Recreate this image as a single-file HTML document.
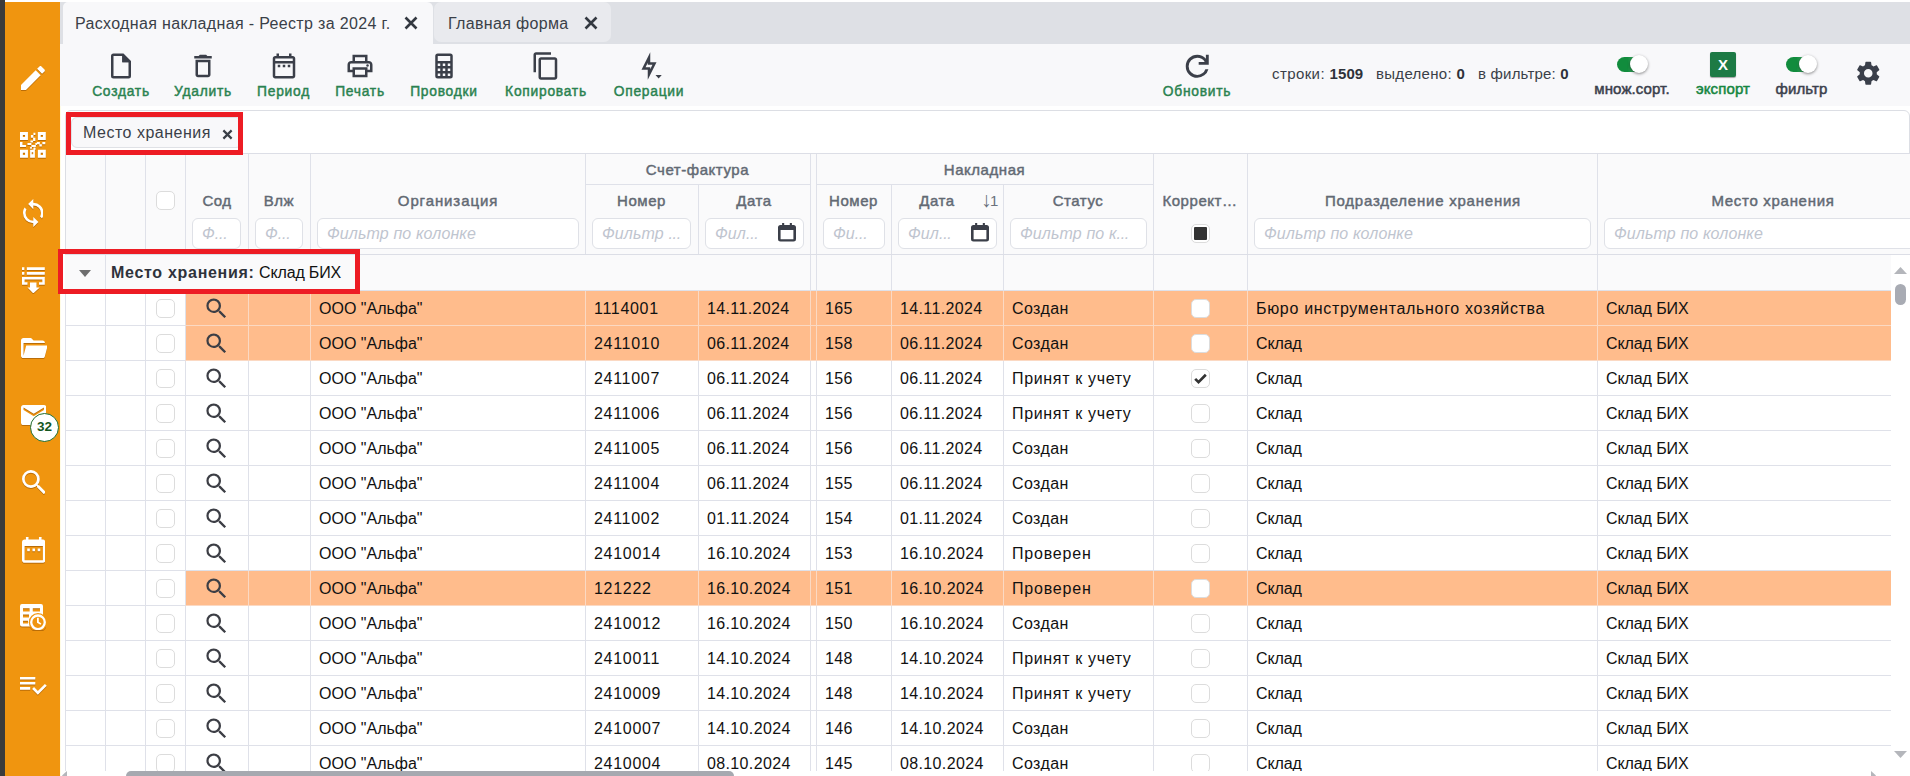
<!DOCTYPE html>
<html lang="ru">
<head>
<meta charset="utf-8">
<title>Расходная накладная - Реестр за 2024 г.</title>
<style>
*{box-sizing:border-box;margin:0;padding:0}
html,body{width:1910px;height:776px;overflow:hidden;background:#fff}
body{position:relative;font-family:"Liberation Sans","DejaVu Sans",sans-serif;font-size:16px;color:#111}
.abs{position:absolute}
svg{display:block}

/* ---------- sidebar ---------- */
#dark{left:0;top:0;width:5px;height:776px;background:#3b3b3b;z-index:32}
#side{left:5px;top:0;width:55px;height:776px;background:#f0950f;z-index:30}
#side svg{position:absolute;fill:#fff;filter:drop-shadow(0.5px 1.5px 0.6px rgba(120,60,0,.45))}
#badge{left:30px;top:413px;width:29px;height:29px;border-radius:50%;background:#fff;border:1.5px solid #1f6b2c;color:#14561f;font-weight:700;font-size:13.5px;text-align:center;line-height:26px;z-index:31;letter-spacing:0}

/* ---------- tabs ---------- */
#topline{left:5px;top:0;width:1905px;height:2px;background:#fff;z-index:31}
#tabbar{left:60px;top:1.5px;width:1850px;height:42.5px;background:#dee0e5}
.tab{position:absolute;top:.5px;height:42px;font-size:16px;color:#3a3f48;line-height:42px;white-space:nowrap}
#tab1{left:3px;width:370px;background:#f8f8fa;border-radius:5px 6px 0 0}
#tab2{left:374px;width:177px;height:40px;background:#e9eaee;border-radius:7px}
.tab span{position:absolute;top:0}
.tab svg{position:absolute;top:14px;width:14px;height:14px}

/* ---------- toolbar ---------- */
#toolbar{left:60px;top:44px;width:1850px;height:62px;background:#f8f8fa}
.tb{position:absolute;top:0;height:62px;text-align:center;white-space:nowrap}
.tb svg{position:absolute;fill:#3b3f49}
.tb b{position:absolute;left:-60px;right:-60px;top:38px;font-size:13.8px;line-height:20px;font-weight:400;color:#2a8250;-webkit-text-stroke:.45px #2a8250;text-align:center;letter-spacing:.75px}
.stat{position:absolute;top:20px;font-size:15px;line-height:20px;color:#3a3f48;white-space:nowrap;letter-spacing:.4px}
.stat b{font-weight:700;color:#2e323a;letter-spacing:.1px}
.lbl{position:absolute;top:35px;font-size:15px;line-height:20px;font-weight:400;color:#3a404c;-webkit-text-stroke:.5px #3a404c;white-space:nowrap;text-align:center;letter-spacing:.1px}
.lbl.g{color:#158640;-webkit-text-stroke-color:#158640}
.tog{position:absolute;top:12.5px;width:30px;height:15px;border-radius:7.5px;background:linear-gradient(90deg,#118c3d 0%,#118c3d 35%,#8cc7a0 100%)}
.tog i{position:absolute;right:-1px;top:-1.5px;width:18px;height:18px;border-radius:50%;background:#fff;box-shadow:0 1px 3px rgba(0,0,0,.45)}
#xls{left:1650px;top:7.5px;width:26px;height:25px;background:#1d7a45;border-radius:2px;box-shadow:0 1px 1px rgba(0,0,0,.35);color:#fff;font-weight:700;font-size:15px;line-height:25px;text-align:center}

/* ---------- grid container ---------- */
#grid{left:65px;top:110px;width:1845px;height:680px;border:1px solid #dcdee4;border-radius:6px 6px 0 0;background:#fff}
#chip{left:71px;top:117px;width:171px;height:31px;border:1px solid #dfe1e6;border-radius:6px;background:#f8f8fa;font-size:16px;line-height:30px;color:#3a3f48}
#chip span{position:absolute;left:11px;top:0;letter-spacing:.5px}
#chip svg{position:absolute;left:150px;top:11px;width:11px;height:11px}

/* ---------- header ---------- */
#head{left:66px;top:153px;width:1844px;height:102px;background:#fafafb;border-top:1px solid #dcdee6;border-bottom:1px solid #dcdee6}
.vl{position:absolute;width:1px;background:#dfe1e9}
.hl1{position:absolute;height:1px;background:#dfe1e9}
.h{position:absolute;font-size:15px;font-weight:400;color:#626973;-webkit-text-stroke:.45px #626973;line-height:20px;text-align:center;white-space:nowrap;letter-spacing:.55px}
.f{position:absolute;top:218px;height:31px;border:1px solid #dfe1e7;border-radius:6px;background:#fff;font-style:italic;font-size:16px;line-height:30px;color:#bfc5cf;padding-left:9px;white-space:nowrap;overflow:hidden;letter-spacing:.12px}
.f s{text-decoration:none;letter-spacing:-.3px}
.f svg{position:absolute;right:7px;top:4px;width:18px;height:19px;fill:#3b3f49}
.cb{display:block;position:absolute;width:19px;height:19px;border:1px solid #dcdcdc;border-radius:5px;background:#fff}
.cb svg{position:absolute;left:0;top:0;width:17px;height:17px}

/* ---------- rows ---------- */
#grow{left:65px;top:255px;width:1826px;height:36px;background:#fafafb}
.row{position:absolute;left:65px;width:1826px;height:35px;overflow:hidden}
.c{position:absolute;top:0;height:35px;border-left:1px solid #dfe1e9;border-bottom:1px solid #dfe1e9;background:#fff}
.t{font-size:16px;line-height:35px;padding-left:8px;white-space:nowrap;overflow:hidden;color:#111;letter-spacing:.36px}
.c5{letter-spacing:0}
.c6{letter-spacing:.7px}
.c13,.c14{letter-spacing:-.1px}
.c13.w{letter-spacing:.68px}
.hl .c{background:#ffbc8c;border-color:#fbd9c3}
.hl .c0,.hl .c1,.hl .c2{background:#fff;border-color:#dfe1e9}
.hl .c3{border-left-color:#dfe1e9}
.c2 .cb{left:10px;top:7.5px;height:19.5px}
.c12 .cb{left:37px;top:7.5px;height:19.5px}
.mag{position:absolute;left:17.2px;top:4.2px;width:27px;height:27px;fill:#3c3e45}
.c0{left:0px;width:40px}
.c1{left:40px;width:40px}
.c2{left:80px;width:40px}
.c3{left:120px;width:63px}
.c4{left:183px;width:62px}
.c5{left:245px;width:275px}
.c6{left:520px;width:113px}
.c7{left:633px;width:112px}
.c8{left:745px;width:6px}
.c9{left:751px;width:75px}
.c10{left:826px;width:112px}
.c11{left:938px;width:150px}
.c12{left:1088px;width:94px}
.c13{left:1182px;width:350px}
.c14{left:1532px;width:313px}

/* ---------- scrollbars ---------- */
#vs{left:1891px;top:255px;width:19px;height:516px;background:#fff}
#hs{left:61px;top:771px;width:1849px;height:5px;background:#fff;z-index:5}
.red{position:absolute;border:5px solid #ed1c24;z-index:40}
</style>
</head>
<body>

<!-- top tabs -->
<div id="topline" class="abs"></div>
<div id="tabbar" class="abs">
  <div class="tab" id="tab1"><span style="left:12px;top:1px;letter-spacing:.34px">Расходная накладная - Реестр за 2024 г.</span>
    <svg style="left:341px" viewBox="0 0 14 14"><path d="M1.5 1.5l11 11M12.5 1.5l-11 11" stroke="#333840" stroke-width="2.6" fill="none"/></svg></div>
  <div class="tab" id="tab2"><span style="left:14px;top:1px;letter-spacing:.33px">Главная форма</span>
    <svg style="left:150px" viewBox="0 0 14 14"><path d="M1.5 1.5l11 11M12.5 1.5l-11 11" stroke="#333840" stroke-width="2.6" fill="none"/></svg></div>
</div>

<!-- toolbar -->
<div id="toolbar" class="abs">
  <div class="tb" style="left:61px;width:0"><svg style="left:-15px;top:7px;width:30px;height:30px" viewBox="0 0 24 24"><path d="M14,2H6A2,2 0 0,0 4,4V20A2,2 0 0,0 6,22H18A2,2 0 0,0 20,20V8L14,2M18,20H6V4H13V9H18V20Z"/><path d="M13 3V9H19Z"/></svg><b>Создать</b></div>
  <div class="tb" style="left:143px;width:0"><svg style="left:-15px;top:7px;width:30px;height:30px" viewBox="0 0 24 24"><path d="M6 19c0 1.1.9 2 2 2h8c1.1 0 2-.9 2-2V7H6v12zM8 9h8v10H8V9zm7.5-5l-1-1h-5l-1 1H5v2h14V4h-3.5z"/></svg><b>Удалить</b></div>
  <div class="tb" style="left:223.5px;width:0"><svg style="left:-15px;top:7px;width:30px;height:30px" viewBox="0 0 24 24"><path d="M7 11h2v2H7v-2zm14-5v14c0 1.1-.9 2-2 2H5c-1.11 0-2-.9-2-2l.01-14c0-1.1.88-2 1.99-2h1V2h2v2h8V2h2v2h1c1.1 0 2 .9 2 2zM5 8h14V6H5v2zm14 12V10H5v10h14zm-4-7h2v-2h-2v2zm-4 0h2v-2h-2v2z"/></svg><b>Период</b></div>
  <div class="tb" style="left:300px;width:0"><svg style="left:-15px;top:7px;width:30px;height:30px" viewBox="0 0 24 24"><path d="M19 8h-1V3H6v5H5c-1.66 0-3 1.34-3 3v6h4v4h12v-4h4v-6c0-1.66-1.34-3-3-3zM8 5h8v3H8V5zm8 12v2H8v-4h8v2zm2-2v-2H6v2H4v-4c0-.55.45-1 1-1h14c.55 0 1 .45 1 1v4h-2z"/><circle cx="18" cy="11.5" r="1"/></svg><b>Печать</b></div>
  <div class="tb" style="left:384px;width:0"><svg style="left:-15px;top:7px;width:30px;height:30px" viewBox="0 0 24 24"><path d="M7,2H17A2,2 0 0,1 19,4V20A2,2 0 0,1 17,22H7A2,2 0 0,1 5,20V4A2,2 0 0,1 7,2M7,4V8H17V4H7M7,10V12H9V10H7M11,10V12H13V10H11M15,10V12H17V10H15M7,14V16H9V14H7M11,14V16H13V14H11M15,14V16H17V14H15M7,18V20H9V18H7M11,18V20H13V18H11M15,18V20H17V18H15Z"/></svg><b>Проводки</b></div>
  <div class="tb" style="left:486px;width:0"><svg style="left:-15px;top:7px;width:30px;height:30px" viewBox="0 0 24 24"><path d="M16 1H4c-1.1 0-2 .9-2 2v14h2V3h12V1zm3 4H8c-1.1 0-2 .9-2 2v14c0 1.1.9 2 2 2h11c1.1 0 2-.9 2-2V7c0-1.1-.9-2-2-2zm0 16H8V7h11v14z"/></svg><b>Копировать</b></div>
  <div class="tb" style="left:589px;width:0"><svg style="left:-15px;top:7px;width:30px;height:30px;overflow:visible" viewBox="0 0 24 24"><path d="M11 9.47V11H14.76L13 14.53V13H9.24L11 9.47M13 1L6 15H11V23L18 9H13V1Z"/><path d="M17.2 19.2h5l-2.5 2.7z"/></svg><b>Операции</b></div>
  <div class="tb" style="left:1137px;width:0"><svg style="left:-17px;top:5px;width:34.5px;height:34.5px" viewBox="0 -960 960 960"><path d="M480-160q-134 0-227-93t-93-227q0-134 93-227t227-93q69 0 132 28.5T720-690v-110h80v280H520v-80h168q-32-56-87.5-88T480-720q-100 0-170 70t-70 170q0 100 70 170t170 70q77 0 139-44t87-116h84q-28 106-114 173t-196 67Z"/></svg><b>Обновить</b></div>

  <div class="stat" style="left:1212px">строки: <b>1509</b></div>
  <div class="stat" style="left:1316px;letter-spacing:.3px">выделено: <b>0</b></div>
  <div class="stat" style="left:1418px;letter-spacing:.2px">в фильтре: <b>0</b></div>

  <div class="tog" style="left:1557px"><i></i></div>
  <div class="lbl" style="left:1512px;width:120px">множ.сорт.</div>
  <div id="xls" class="abs">X</div>
  <div class="lbl g" style="left:1603px;width:120px">экспорт</div>
  <div class="tog" style="left:1726px"><i></i></div>
  <div class="lbl" style="left:1681.5px;width:120px">фильтр</div>
  <svg class="abs" style="left:1794px;top:14.75px;width:28.5px;height:28.5px;fill:#3a3f4a" viewBox="0 0 24 24"><path d="M19.14,12.94c0.04-0.3,0.06-0.61,0.06-0.94c0-0.32-0.02-0.64-0.07-0.94l2.03-1.58c0.18-0.14,0.23-0.41,0.12-0.61 l-1.92-3.32c-0.12-0.22-0.37-0.29-0.59-0.22l-2.39,0.96c-0.5-0.38-1.03-0.7-1.62-0.94L14.4,2.81c-0.04-0.24-0.24-0.41-0.48-0.41 h-3.84c-0.24,0-0.43,0.17-0.47,0.41L9.25,5.35C8.66,5.59,8.12,5.92,7.63,6.29L5.24,5.33c-0.22-0.08-0.47,0-0.59,0.22L2.74,8.87 C2.62,9.08,2.66,9.34,2.86,9.48l2.03,1.58C4.84,11.36,4.8,11.69,4.8,12s0.02,0.64,0.07,0.94l-2.03,1.58 c-0.18,0.14-0.23,0.41-0.12,0.61l1.92,3.32c0.12,0.22,0.37,0.29,0.59,0.22l2.39-0.96c0.5,0.38,1.03,0.7,1.62,0.94l0.36,2.54 c0.05,0.24,0.24,0.41,0.48,0.41h3.84c0.24,0,0.44-0.17,0.47-0.41l0.36-2.54c0.59-0.24,1.13-0.56,1.62-0.94l2.39,0.96 c0.22,0.08,0.47,0,0.59-0.22l1.92-3.32c0.12-0.22,0.07-0.47-0.12-0.61L19.14,12.94z M12,15.6c-1.98,0-3.6-1.62-3.6-3.6 s1.62-3.6,3.6-3.6s3.6,1.62,3.6,3.6S13.98,15.6,12,15.6z"/></svg>
</div>

<!-- grid container -->
<div class="abs" style="left:60px;top:106px;width:1px;height:670px;background:#fffce6"></div>
<div id="grid" class="abs"></div>
<div id="chip" class="abs"><span>Место хранения</span><svg viewBox="0 0 12 12"><path d="M1.5 1.5l9 9M10.5 1.5l-9 9" stroke="#3a3f48" stroke-width="2.4" fill="none"/></svg></div>

<!-- header -->
<div id="head" class="abs"></div>
<div class="vl" style="left:105px;top:154px;height:100px"></div>
<div class="vl" style="left:145px;top:154px;height:100px"></div>
<div class="vl" style="left:185px;top:154px;height:100px"></div>
<div class="vl" style="left:248px;top:154px;height:100px"></div>
<div class="vl" style="left:310px;top:154px;height:100px"></div>
<div class="vl" style="left:585px;top:154px;height:100px"></div>
<div class="vl" style="left:810px;top:154px;height:100px"></div>
<div class="vl" style="left:816px;top:154px;height:100px"></div>
<div class="vl" style="left:1153px;top:154px;height:100px"></div>
<div class="vl" style="left:1247px;top:154px;height:100px"></div>
<div class="vl" style="left:1597px;top:154px;height:100px"></div>
<div class="vl" style="left:698px;top:185px;height:69px"></div>
<div class="vl" style="left:891px;top:185px;height:69px"></div>
<div class="vl" style="left:1003px;top:185px;height:69px"></div>
<div class="hl1" style="left:586px;top:184px;width:224px"></div>
<div class="hl1" style="left:817px;top:184px;width:336px"></div>
<div class="h" style="left:547.5px;width:300px;top:160px;">Счет-фактура</div>
<div class="h" style="left:834.5px;width:300px;top:160px;">Накладная</div>
<div class="h" style="left:67px;width:300px;top:191px;">Сод</div>
<div class="h" style="left:129px;width:300px;top:191px;">Влж</div>
<div class="h" style="left:298px;width:300px;top:191px;letter-spacing:.9px">Организация</div>
<div class="h" style="left:491.5px;width:300px;top:191px;">Номер</div>
<div class="h" style="left:604px;width:300px;top:191px;">Дата</div>
<div class="h" style="left:703.5px;width:300px;top:191px;">Номер</div>
<div class="h" style="left:787px;width:300px;top:191px;">Дата</div>
<div class="h" style="left:928px;width:300px;top:191px;">Статус</div>
<div class="h" style="left:1050px;width:300px;top:191px;">Коррект…</div>
<div class="h" style="left:1273px;width:300px;top:191px;letter-spacing:.77px">Подразделение хранения</div>
<div class="h" style="left:1623px;width:300px;top:191px;letter-spacing:.7px">Место хранения</div>
<div class="h" style="left:980px;top:188.500px;width:18px;font-weight:400;font-size:15px;letter-spacing:-1.500px;color:#6b727d;-webkit-text-stroke:0"><span style="font-size:21px;line-height:20px;position:relative;top:1.500px">↓</span>1</div>
<div class="f" style="left:192px;width:49px">Ф<s>...</s></div>
<div class="f" style="left:255px;width:48px">Ф<s>...</s></div>
<div class="f" style="left:317px;width:262px">Фильтр по колонке</div>
<div class="f" style="left:592px;width:99px">Фильтр <s>...</s></div>
<div class="f" style="left:705px;width:99px">Фил<s>...</s><svg viewBox="0 0 18 19"><path d="M4.1 0h2.1v3H4.1zM11.8 0h2.1v3h-2.1z"/><path fill-rule="evenodd" d="M2.5 2h13a2.5 2.5 0 0 1 2.5 2.5v11.5a2.5 2.5 0 0 1-2.5 2.5h-13a2.500 2.500 0 0 1-2.500-2.500v-11.500a2.500 2.500 0 0 1 2.500-2.500zM2.600 7h12.800v9.200h-12.800z"/></svg></div>
<div class="f" style="left:823px;width:62px">Фи<s>...</s></div>
<div class="f" style="left:898px;width:99px">Фил<s>...</s><svg viewBox="0 0 18 19"><path d="M4.1 0h2.1v3H4.1zM11.8 0h2.1v3h-2.1z"/><path fill-rule="evenodd" d="M2.5 2h13a2.5 2.5 0 0 1 2.5 2.5v11.5a2.5 2.5 0 0 1-2.5 2.5h-13a2.500 2.500 0 0 1-2.500-2.500v-11.500a2.500 2.500 0 0 1 2.500-2.500zM2.600 7h12.800v9.200h-12.800z"/></svg></div>
<div class="f" style="left:1010px;width:137px">Фильтр по к<s>...</s></div>
<div class="f" style="left:1254px;width:337px">Фильтр по колонке</div>
<div class="f" style="left:1604px;width:337px">Фильтр по колонке</div>
<i class="cb" style="left:156px;top:191px"></i>
<i class="cb" style="left:1191px;top:224px"><b style="position:absolute;left:2.25px;top:2.25px;width:12.5px;height:12.5px;background:#333;border-radius:1px"></b></i>

<!-- group row -->
<div id="grow" class="abs"></div>
<div class="vl" style="left:105px;top:255px;height:35px"></div>
<div class="vl" style="left:810px;top:255px;height:35px"></div>
<div class="vl" style="left:816px;top:255px;height:35px"></div>
<div class="vl" style="left:891px;top:255px;height:35px"></div>
<div class="vl" style="left:1003px;top:255px;height:35px"></div>
<div class="vl" style="left:1153px;top:255px;height:35px"></div>
<div class="vl" style="left:1247px;top:255px;height:35px"></div>
<div class="vl" style="left:1597px;top:255px;height:35px"></div>
<div class="hl1" style="left:66px;top:290px;width:1825px"></div>
<svg class="abs" style="left:79px;top:270px;width:12px;height:7px" viewBox="0 0 12 7"><path d="M0 0H12L6 7Z" fill="#6e6e6e"/></svg>
<div class="abs" style="left:111px;top:262px;font-size:16px;line-height:22px;white-space:nowrap;color:#111"><b style="color:#2f333b;letter-spacing:.7px">Место хранения:</b> <span style="letter-spacing:-.15px">Склад БИХ</span></div>

<!-- data rows -->
<div class="row hl" style="top:291px"><div class="c c0"></div><div class="c c1"></div><div class="c c2"><i class="cb"></i></div><div class="c c3"><svg class="mag" viewBox="0 0 24 24"><path d="M9.5,3A6.5,6.5 0 0,1 16,9.5C16,11.11 15.41,12.59 14.44,13.73L14.71,14H15.5L20.5,19L19,20.5L14,15.5V14.71L13.73,14.44C12.59,15.41 11.11,16 9.5,16A6.5,6.5 0 0,1 3,9.5A6.5,6.5 0 0,1 9.5,3M9.5,5C7,5 5,7 5,9.5C5,12 7,14 9.5,14C12,14 14,12 14,9.5C14,7 12,5 9.5,5Z"/></svg></div><div class="c c4"></div><div class="c c5 t">ООО "Альфа"</div><div class="c c6 t">1114001</div><div class="c c7 t">14.11.2024</div><div class="c c8"></div><div class="c c9 t">165</div><div class="c c10 t">14.11.2024</div><div class="c c11 t" style="letter-spacing:0.4px">Создан</div><div class="c c12"><i class="cb"></i></div><div class="c c13 t w">Бюро инструментального хозяйства</div><div class="c c14 t">Склад БИХ</div></div>
<div class="row hl" style="top:326px"><div class="c c0"></div><div class="c c1"></div><div class="c c2"><i class="cb"></i></div><div class="c c3"><svg class="mag" viewBox="0 0 24 24"><path d="M9.5,3A6.5,6.5 0 0,1 16,9.5C16,11.11 15.41,12.59 14.44,13.73L14.71,14H15.5L20.5,19L19,20.5L14,15.5V14.71L13.73,14.44C12.59,15.41 11.11,16 9.5,16A6.5,6.5 0 0,1 3,9.5A6.5,6.5 0 0,1 9.5,3M9.5,5C7,5 5,7 5,9.5C5,12 7,14 9.5,14C12,14 14,12 14,9.5C14,7 12,5 9.5,5Z"/></svg></div><div class="c c4"></div><div class="c c5 t">ООО "Альфа"</div><div class="c c6 t">2411010</div><div class="c c7 t">06.11.2024</div><div class="c c8"></div><div class="c c9 t">158</div><div class="c c10 t">06.11.2024</div><div class="c c11 t" style="letter-spacing:0.4px">Создан</div><div class="c c12"><i class="cb"></i></div><div class="c c13 t">Склад</div><div class="c c14 t">Склад БИХ</div></div>
<div class="row" style="top:361px"><div class="c c0"></div><div class="c c1"></div><div class="c c2"><i class="cb"></i></div><div class="c c3"><svg class="mag" viewBox="0 0 24 24"><path d="M9.5,3A6.5,6.5 0 0,1 16,9.5C16,11.11 15.41,12.59 14.44,13.73L14.71,14H15.5L20.5,19L19,20.5L14,15.5V14.71L13.73,14.44C12.59,15.41 11.11,16 9.5,16A6.5,6.5 0 0,1 3,9.5A6.5,6.5 0 0,1 9.5,3M9.5,5C7,5 5,7 5,9.5C5,12 7,14 9.5,14C12,14 14,12 14,9.5C14,7 12,5 9.5,5Z"/></svg></div><div class="c c4"></div><div class="c c5 t">ООО "Альфа"</div><div class="c c6 t">2411007</div><div class="c c7 t">06.11.2024</div><div class="c c8"></div><div class="c c9 t">156</div><div class="c c10 t">06.11.2024</div><div class="c c11 t" style="letter-spacing:0.66px">Принят к учету</div><div class="c c12"><i class="cb on"><svg viewBox="0 0 24 24"><path d="M4.500 12.500l4.700 4.600L19.500 6.800" fill="none" stroke="#333" stroke-width="3.800"/></svg></i></div><div class="c c13 t">Склад</div><div class="c c14 t">Склад БИХ</div></div>
<div class="row" style="top:396px"><div class="c c0"></div><div class="c c1"></div><div class="c c2"><i class="cb"></i></div><div class="c c3"><svg class="mag" viewBox="0 0 24 24"><path d="M9.5,3A6.5,6.5 0 0,1 16,9.5C16,11.11 15.41,12.59 14.44,13.73L14.71,14H15.5L20.5,19L19,20.5L14,15.5V14.71L13.73,14.44C12.59,15.41 11.11,16 9.5,16A6.5,6.5 0 0,1 3,9.5A6.5,6.5 0 0,1 9.5,3M9.5,5C7,5 5,7 5,9.5C5,12 7,14 9.5,14C12,14 14,12 14,9.5C14,7 12,5 9.5,5Z"/></svg></div><div class="c c4"></div><div class="c c5 t">ООО "Альфа"</div><div class="c c6 t">2411006</div><div class="c c7 t">06.11.2024</div><div class="c c8"></div><div class="c c9 t">156</div><div class="c c10 t">06.11.2024</div><div class="c c11 t" style="letter-spacing:0.66px">Принят к учету</div><div class="c c12"><i class="cb"></i></div><div class="c c13 t">Склад</div><div class="c c14 t">Склад БИХ</div></div>
<div class="row" style="top:431px"><div class="c c0"></div><div class="c c1"></div><div class="c c2"><i class="cb"></i></div><div class="c c3"><svg class="mag" viewBox="0 0 24 24"><path d="M9.5,3A6.5,6.5 0 0,1 16,9.5C16,11.11 15.41,12.59 14.44,13.73L14.71,14H15.5L20.5,19L19,20.5L14,15.5V14.71L13.73,14.44C12.59,15.41 11.11,16 9.5,16A6.5,6.5 0 0,1 3,9.5A6.5,6.5 0 0,1 9.5,3M9.5,5C7,5 5,7 5,9.5C5,12 7,14 9.5,14C12,14 14,12 14,9.5C14,7 12,5 9.5,5Z"/></svg></div><div class="c c4"></div><div class="c c5 t">ООО "Альфа"</div><div class="c c6 t">2411005</div><div class="c c7 t">06.11.2024</div><div class="c c8"></div><div class="c c9 t">156</div><div class="c c10 t">06.11.2024</div><div class="c c11 t" style="letter-spacing:0.4px">Создан</div><div class="c c12"><i class="cb"></i></div><div class="c c13 t">Склад</div><div class="c c14 t">Склад БИХ</div></div>
<div class="row" style="top:466px"><div class="c c0"></div><div class="c c1"></div><div class="c c2"><i class="cb"></i></div><div class="c c3"><svg class="mag" viewBox="0 0 24 24"><path d="M9.5,3A6.5,6.5 0 0,1 16,9.5C16,11.11 15.41,12.59 14.44,13.73L14.71,14H15.5L20.5,19L19,20.5L14,15.5V14.71L13.73,14.44C12.59,15.41 11.11,16 9.5,16A6.5,6.5 0 0,1 3,9.5A6.5,6.5 0 0,1 9.5,3M9.5,5C7,5 5,7 5,9.5C5,12 7,14 9.5,14C12,14 14,12 14,9.5C14,7 12,5 9.5,5Z"/></svg></div><div class="c c4"></div><div class="c c5 t">ООО "Альфа"</div><div class="c c6 t">2411004</div><div class="c c7 t">06.11.2024</div><div class="c c8"></div><div class="c c9 t">155</div><div class="c c10 t">06.11.2024</div><div class="c c11 t" style="letter-spacing:0.4px">Создан</div><div class="c c12"><i class="cb"></i></div><div class="c c13 t">Склад</div><div class="c c14 t">Склад БИХ</div></div>
<div class="row" style="top:501px"><div class="c c0"></div><div class="c c1"></div><div class="c c2"><i class="cb"></i></div><div class="c c3"><svg class="mag" viewBox="0 0 24 24"><path d="M9.5,3A6.5,6.5 0 0,1 16,9.5C16,11.11 15.41,12.59 14.44,13.73L14.71,14H15.5L20.5,19L19,20.5L14,15.5V14.71L13.73,14.44C12.59,15.41 11.11,16 9.5,16A6.5,6.5 0 0,1 3,9.5A6.5,6.5 0 0,1 9.5,3M9.5,5C7,5 5,7 5,9.5C5,12 7,14 9.5,14C12,14 14,12 14,9.5C14,7 12,5 9.5,5Z"/></svg></div><div class="c c4"></div><div class="c c5 t">ООО "Альфа"</div><div class="c c6 t">2411002</div><div class="c c7 t">01.11.2024</div><div class="c c8"></div><div class="c c9 t">154</div><div class="c c10 t">01.11.2024</div><div class="c c11 t" style="letter-spacing:0.4px">Создан</div><div class="c c12"><i class="cb"></i></div><div class="c c13 t">Склад</div><div class="c c14 t">Склад БИХ</div></div>
<div class="row" style="top:536px"><div class="c c0"></div><div class="c c1"></div><div class="c c2"><i class="cb"></i></div><div class="c c3"><svg class="mag" viewBox="0 0 24 24"><path d="M9.5,3A6.5,6.5 0 0,1 16,9.5C16,11.11 15.41,12.59 14.44,13.73L14.71,14H15.5L20.5,19L19,20.5L14,15.5V14.71L13.73,14.44C12.59,15.41 11.11,16 9.5,16A6.5,6.5 0 0,1 3,9.5A6.5,6.5 0 0,1 9.5,3M9.5,5C7,5 5,7 5,9.5C5,12 7,14 9.5,14C12,14 14,12 14,9.5C14,7 12,5 9.5,5Z"/></svg></div><div class="c c4"></div><div class="c c5 t">ООО "Альфа"</div><div class="c c6 t">2410014</div><div class="c c7 t">16.10.2024</div><div class="c c8"></div><div class="c c9 t">153</div><div class="c c10 t">16.10.2024</div><div class="c c11 t" style="letter-spacing:0.8px">Проверен</div><div class="c c12"><i class="cb"></i></div><div class="c c13 t">Склад</div><div class="c c14 t">Склад БИХ</div></div>
<div class="row hl" style="top:571px"><div class="c c0"></div><div class="c c1"></div><div class="c c2"><i class="cb"></i></div><div class="c c3"><svg class="mag" viewBox="0 0 24 24"><path d="M9.5,3A6.5,6.5 0 0,1 16,9.5C16,11.11 15.41,12.59 14.44,13.73L14.71,14H15.5L20.5,19L19,20.5L14,15.5V14.71L13.73,14.44C12.59,15.41 11.11,16 9.5,16A6.5,6.5 0 0,1 3,9.5A6.5,6.5 0 0,1 9.5,3M9.5,5C7,5 5,7 5,9.5C5,12 7,14 9.5,14C12,14 14,12 14,9.5C14,7 12,5 9.5,5Z"/></svg></div><div class="c c4"></div><div class="c c5 t">ООО "Альфа"</div><div class="c c6 t">121222</div><div class="c c7 t">16.10.2024</div><div class="c c8"></div><div class="c c9 t">151</div><div class="c c10 t">16.10.2024</div><div class="c c11 t" style="letter-spacing:0.8px">Проверен</div><div class="c c12"><i class="cb"></i></div><div class="c c13 t">Склад</div><div class="c c14 t">Склад БИХ</div></div>
<div class="row" style="top:606px"><div class="c c0"></div><div class="c c1"></div><div class="c c2"><i class="cb"></i></div><div class="c c3"><svg class="mag" viewBox="0 0 24 24"><path d="M9.5,3A6.5,6.5 0 0,1 16,9.5C16,11.11 15.41,12.59 14.44,13.73L14.71,14H15.5L20.5,19L19,20.5L14,15.5V14.71L13.73,14.44C12.59,15.41 11.11,16 9.5,16A6.5,6.5 0 0,1 3,9.5A6.5,6.5 0 0,1 9.5,3M9.5,5C7,5 5,7 5,9.5C5,12 7,14 9.5,14C12,14 14,12 14,9.5C14,7 12,5 9.5,5Z"/></svg></div><div class="c c4"></div><div class="c c5 t">ООО "Альфа"</div><div class="c c6 t">2410012</div><div class="c c7 t">16.10.2024</div><div class="c c8"></div><div class="c c9 t">150</div><div class="c c10 t">16.10.2024</div><div class="c c11 t" style="letter-spacing:0.4px">Создан</div><div class="c c12"><i class="cb"></i></div><div class="c c13 t">Склад</div><div class="c c14 t">Склад БИХ</div></div>
<div class="row" style="top:641px"><div class="c c0"></div><div class="c c1"></div><div class="c c2"><i class="cb"></i></div><div class="c c3"><svg class="mag" viewBox="0 0 24 24"><path d="M9.5,3A6.5,6.5 0 0,1 16,9.5C16,11.11 15.41,12.59 14.44,13.73L14.71,14H15.5L20.5,19L19,20.5L14,15.5V14.71L13.73,14.44C12.59,15.41 11.11,16 9.5,16A6.5,6.5 0 0,1 3,9.5A6.5,6.5 0 0,1 9.5,3M9.5,5C7,5 5,7 5,9.5C5,12 7,14 9.5,14C12,14 14,12 14,9.5C14,7 12,5 9.5,5Z"/></svg></div><div class="c c4"></div><div class="c c5 t">ООО "Альфа"</div><div class="c c6 t">2410011</div><div class="c c7 t">14.10.2024</div><div class="c c8"></div><div class="c c9 t">148</div><div class="c c10 t">14.10.2024</div><div class="c c11 t" style="letter-spacing:0.66px">Принят к учету</div><div class="c c12"><i class="cb"></i></div><div class="c c13 t">Склад</div><div class="c c14 t">Склад БИХ</div></div>
<div class="row" style="top:676px"><div class="c c0"></div><div class="c c1"></div><div class="c c2"><i class="cb"></i></div><div class="c c3"><svg class="mag" viewBox="0 0 24 24"><path d="M9.5,3A6.5,6.5 0 0,1 16,9.5C16,11.11 15.41,12.59 14.44,13.73L14.71,14H15.5L20.5,19L19,20.5L14,15.5V14.71L13.73,14.44C12.59,15.41 11.11,16 9.5,16A6.5,6.5 0 0,1 3,9.5A6.5,6.5 0 0,1 9.5,3M9.5,5C7,5 5,7 5,9.5C5,12 7,14 9.5,14C12,14 14,12 14,9.5C14,7 12,5 9.5,5Z"/></svg></div><div class="c c4"></div><div class="c c5 t">ООО "Альфа"</div><div class="c c6 t">2410009</div><div class="c c7 t">14.10.2024</div><div class="c c8"></div><div class="c c9 t">148</div><div class="c c10 t">14.10.2024</div><div class="c c11 t" style="letter-spacing:0.66px">Принят к учету</div><div class="c c12"><i class="cb"></i></div><div class="c c13 t">Склад</div><div class="c c14 t">Склад БИХ</div></div>
<div class="row" style="top:711px"><div class="c c0"></div><div class="c c1"></div><div class="c c2"><i class="cb"></i></div><div class="c c3"><svg class="mag" viewBox="0 0 24 24"><path d="M9.5,3A6.5,6.5 0 0,1 16,9.5C16,11.11 15.41,12.59 14.44,13.73L14.71,14H15.5L20.5,19L19,20.5L14,15.5V14.71L13.73,14.44C12.59,15.41 11.11,16 9.5,16A6.5,6.5 0 0,1 3,9.5A6.5,6.5 0 0,1 9.5,3M9.5,5C7,5 5,7 5,9.5C5,12 7,14 9.5,14C12,14 14,12 14,9.5C14,7 12,5 9.5,5Z"/></svg></div><div class="c c4"></div><div class="c c5 t">ООО "Альфа"</div><div class="c c6 t">2410007</div><div class="c c7 t">14.10.2024</div><div class="c c8"></div><div class="c c9 t">146</div><div class="c c10 t">14.10.2024</div><div class="c c11 t" style="letter-spacing:0.4px">Создан</div><div class="c c12"><i class="cb"></i></div><div class="c c13 t">Склад</div><div class="c c14 t">Склад БИХ</div></div>
<div class="row" style="top:746px"><div class="c c0"></div><div class="c c1"></div><div class="c c2"><i class="cb"></i></div><div class="c c3"><svg class="mag" viewBox="0 0 24 24"><path d="M9.5,3A6.5,6.5 0 0,1 16,9.5C16,11.11 15.41,12.59 14.44,13.73L14.71,14H15.5L20.5,19L19,20.5L14,15.5V14.71L13.73,14.44C12.59,15.41 11.11,16 9.5,16A6.5,6.5 0 0,1 3,9.5A6.5,6.5 0 0,1 9.5,3M9.5,5C7,5 5,7 5,9.5C5,12 7,14 9.5,14C12,14 14,12 14,9.5C14,7 12,5 9.5,5Z"/></svg></div><div class="c c4"></div><div class="c c5 t">ООО "Альфа"</div><div class="c c6 t">2410004</div><div class="c c7 t">08.10.2024</div><div class="c c8"></div><div class="c c9 t">145</div><div class="c c10 t">08.10.2024</div><div class="c c11 t" style="letter-spacing:0.4px">Создан</div><div class="c c12"><i class="cb"></i></div><div class="c c13 t">Склад</div><div class="c c14 t">Склад БИХ</div></div>

<!-- scrollbars -->
<div id="vs" class="abs">
  <svg class="abs" style="left:3px;top:12px;width:13px;height:7px" viewBox="0 0 13 7"><path d="M0 7L6.5 0L13 7Z" fill="#b4b6bb"/></svg>
  <div class="abs" style="left:4px;top:29px;width:11px;height:21px;border-radius:5.5px;background:#a8abb3"></div>
  <svg class="abs" style="left:3px;top:496px;width:13px;height:7px" viewBox="0 0 13 7"><path d="M0 0L6.5 7L13 0Z" fill="#b4b6bb"/></svg>
</div>
<div id="hs" class="abs">
  <svg class="abs" style="left:1px;top:0;width:5px;height:8px" viewBox="0 0 5 8"><path d="M5 0L0 4.5L5 9Z" fill="#b4b6bb"/></svg>
  <div class="abs" style="left:65px;top:0;width:608px;height:10px;border-radius:5px;background:#a6a9b0"></div>
  <svg class="abs" style="left:1810px;top:0;width:5px;height:8px" viewBox="0 0 5 8"><path d="M0 0L5 4.5L0 9Z" fill="#b4b6bb"/></svg>
</div>

<!-- red annotation boxes -->
<div class="red" style="left:66px;top:112px;width:177px;height:43px"></div>
<div class="red" style="left:58px;top:249px;width:302px;height:45px"></div>

<!-- sidebar -->
<div id="dark" class="abs"></div>
<div id="side" class="abs">
<svg style="left:16.3px;top:66.0px;width:23.9px;height:24px" viewBox="3 3 18 18" preserveAspectRatio="none"><path fill-rule="evenodd" d="M20.71,7.04C21.1,6.65 21.1,6 20.71,5.63L18.37,3.29C18,2.9 17.35,2.9 16.96,3.29L15.12,5.12L18.87,8.87M3,17.25V21H6.75L17.81,9.93L14.06,6.18L3,17.25Z"/></svg>
<svg style="left:17.8px;top:198.9px;width:20.6px;height:28.1px" viewBox="4 1 16 22" preserveAspectRatio="none"><path fill-rule="evenodd" d="M12,18A6,6 0 0,1 6,12C6,11 6.25,10.03 6.7,9.2L5.24,7.74C4.46,8.97 4,10.43 4,12A8,8 0 0,0 12,20V23L16,19L12,15M12,4V1L8,5L12,9V6A6,6 0 0,1 18,12C18,13 17.75,13.97 17.3,14.8L18.76,16.26C19.54,15.03 20,13.57 20,12A8,8 0 0,0 12,4Z"/></svg>
<svg style="left:15.6px;top:337.8px;width:26.7px;height:20.3px" viewBox="2 4 21.21 16" preserveAspectRatio="none"><path fill-rule="evenodd" d="M19,20H4C2.89,20 2,19.1 2,18V6C2,4.89 2.89,4 4,4H10L12,6H19A2,2 0 0,1 21,8H21L4,8V18L6.14,10H23.21L20.93,18.5C20.7,19.37 19.92,20 19,20Z"/></svg>
<svg style="left:15.8px;top:405.1px;width:25.5px;height:20.2px" viewBox="2 4 20 16" preserveAspectRatio="none"><path fill-rule="evenodd" d="M20,8L12,13L4,8V6L12,11L20,6M20,4H4C2.89,4 2,4.89 2,6V18A2,2 0 0,0 4,20H20A2,2 0 0,0 22,18V6C22,4.89 21.1,4 20,4Z"/></svg>
<svg style="left:16.5px;top:470.2px;width:23.9px;height:24.2px" viewBox="3 3 17.5 17.5" preserveAspectRatio="none"><path fill-rule="evenodd" d="M9.5,3A6.5,6.5 0 0,1 16,9.5C16,11.11 15.41,12.59 14.44,13.73L14.71,14H15.5L20.5,19L19,20.5L14,15.5V14.71L13.73,14.44C12.59,15.41 11.11,16 9.5,16A6.5,6.5 0 0,1 3,9.5A6.5,6.5 0 0,1 9.5,3M9.5,5C7,5 5,7 5,9.5C5,12 7,14 9.5,14C12,14 14,12 14,9.5C14,7 12,5 9.5,5Z"/></svg>
<svg style="left:16.9px;top:537.2px;width:23.5px;height:25.8px" viewBox="3 2 18 20" preserveAspectRatio="none"><path fill-rule="evenodd" d="M9 11H7v2h2v-2zm4 0h-2v2h2v-2zm4 0h-2v2h2v-2zm2-7h-1V2h-2v2H8V2H6v2H5c-1.11 0-1.99.9-1.99 2L3 20c0 1.1.89 2 2 2h14c1.1 0 2-.9 2-2V6c0-1.1-.9-2-2-2zm0 16H5V9h14v11z"/></svg>
<svg style="left:15.2px;top:677.4px;width:26.8px;height:17.7px" viewBox="2 6 21 14" preserveAspectRatio="none"><path fill-rule="evenodd" d="M14,10H2V12H14V10M14,6H2V8H14V6M2,16H10V14H2V16M21.5,11.5L23,13L16,20L11.5,15.5L13,14L16,17L21.5,11.5Z"/></svg>
<svg style="left:15.2px;top:132.2px;width:25.8px;height:25.8px" viewBox="0 0 26 26"><path fill-rule="evenodd" d="M0 0h8v8H0zM2.9 2.9v2.2h2.2V2.9zM18 0h8v8h-8zM20.9 2.9v2.2h2.2V2.9zM0 18h8v8H0zM2.9 20.900v2.200h2.200v-2.200zM18 18h8v8h-8zM20.900 20.900v2.200h2.200v-2.200zM13.500 .8h2v2.200h-2zM11 3h2.500v2.800H11zM13.200 5.800h2.300V9h-2.300zM10.500 8.500h2.700v2h-2.700zM0 10.200h2.500v5H0zM2.500 13h3.500v2.200H2.500zM7.500 11h4v2h-4zM11.500 13h4.500v2.200h-4.500zM17 10.200h3v2.200h-3zM19.500 12.400h2.500v2.200h-2.500zM22.500 10.200h3v2.200h-3zM15.500 11h1.500v2h-1.500zM10.200 18h4.800v8h-4.800zM11.800 20.500v2h1.500v-2zM13.500 15.500h2.200V18h-2.200zM10.200 15.200h1.800v1.800h-1.800z"/></svg>
<svg style="left:16.9px;top:266.9px;width:22.8px;height:26.4px" viewBox="0 0 22.8 26.4"><path d="M0 .3h2.400v2.600H0zM4.800 .3h18v2.600h-18zM0 5h2.400v2.700H0zM4.800 5h18v2.700h-18zM0 10h22.800v7.700H17v-2.500h3.300v-2.600H2.600v2.600h2.900v2.500H0zM8 15.500h6.500v5.100h3.200l-6.400 5.800l-5.800-5.800H8z"/></svg>
<svg style="left:15.2px;top:603.9px;width:26.2px;height:26.2px" viewBox="0 0 26.2 26.2"><path fill-rule="evenodd" d="M2 0h19a2 2 0 0 1 2 2v20.500h-21a2 2 0 0 1-2-2v-18.500a2 2 0 0 1 2-2zM3 4.200v3.200h6.600V4.200zM12.800 4.200v3.200h7.200V4.200zM3 10.500v3h6v-3zM3 16.800v2.800h5v-2.800z"/><circle cx="18" cy="18.300" r="9.200" fill="#f0950f"/><circle cx="18" cy="18.300" r="6.800" fill="none" stroke="#fff" stroke-width="2.300"/><path d="M17 13.800h1.800v4l2.600 1.600l-.9 1.400l-3.500-2.100z"/></svg>
</div>
<div id="badge" class="abs">32</div>

</body>
</html>
